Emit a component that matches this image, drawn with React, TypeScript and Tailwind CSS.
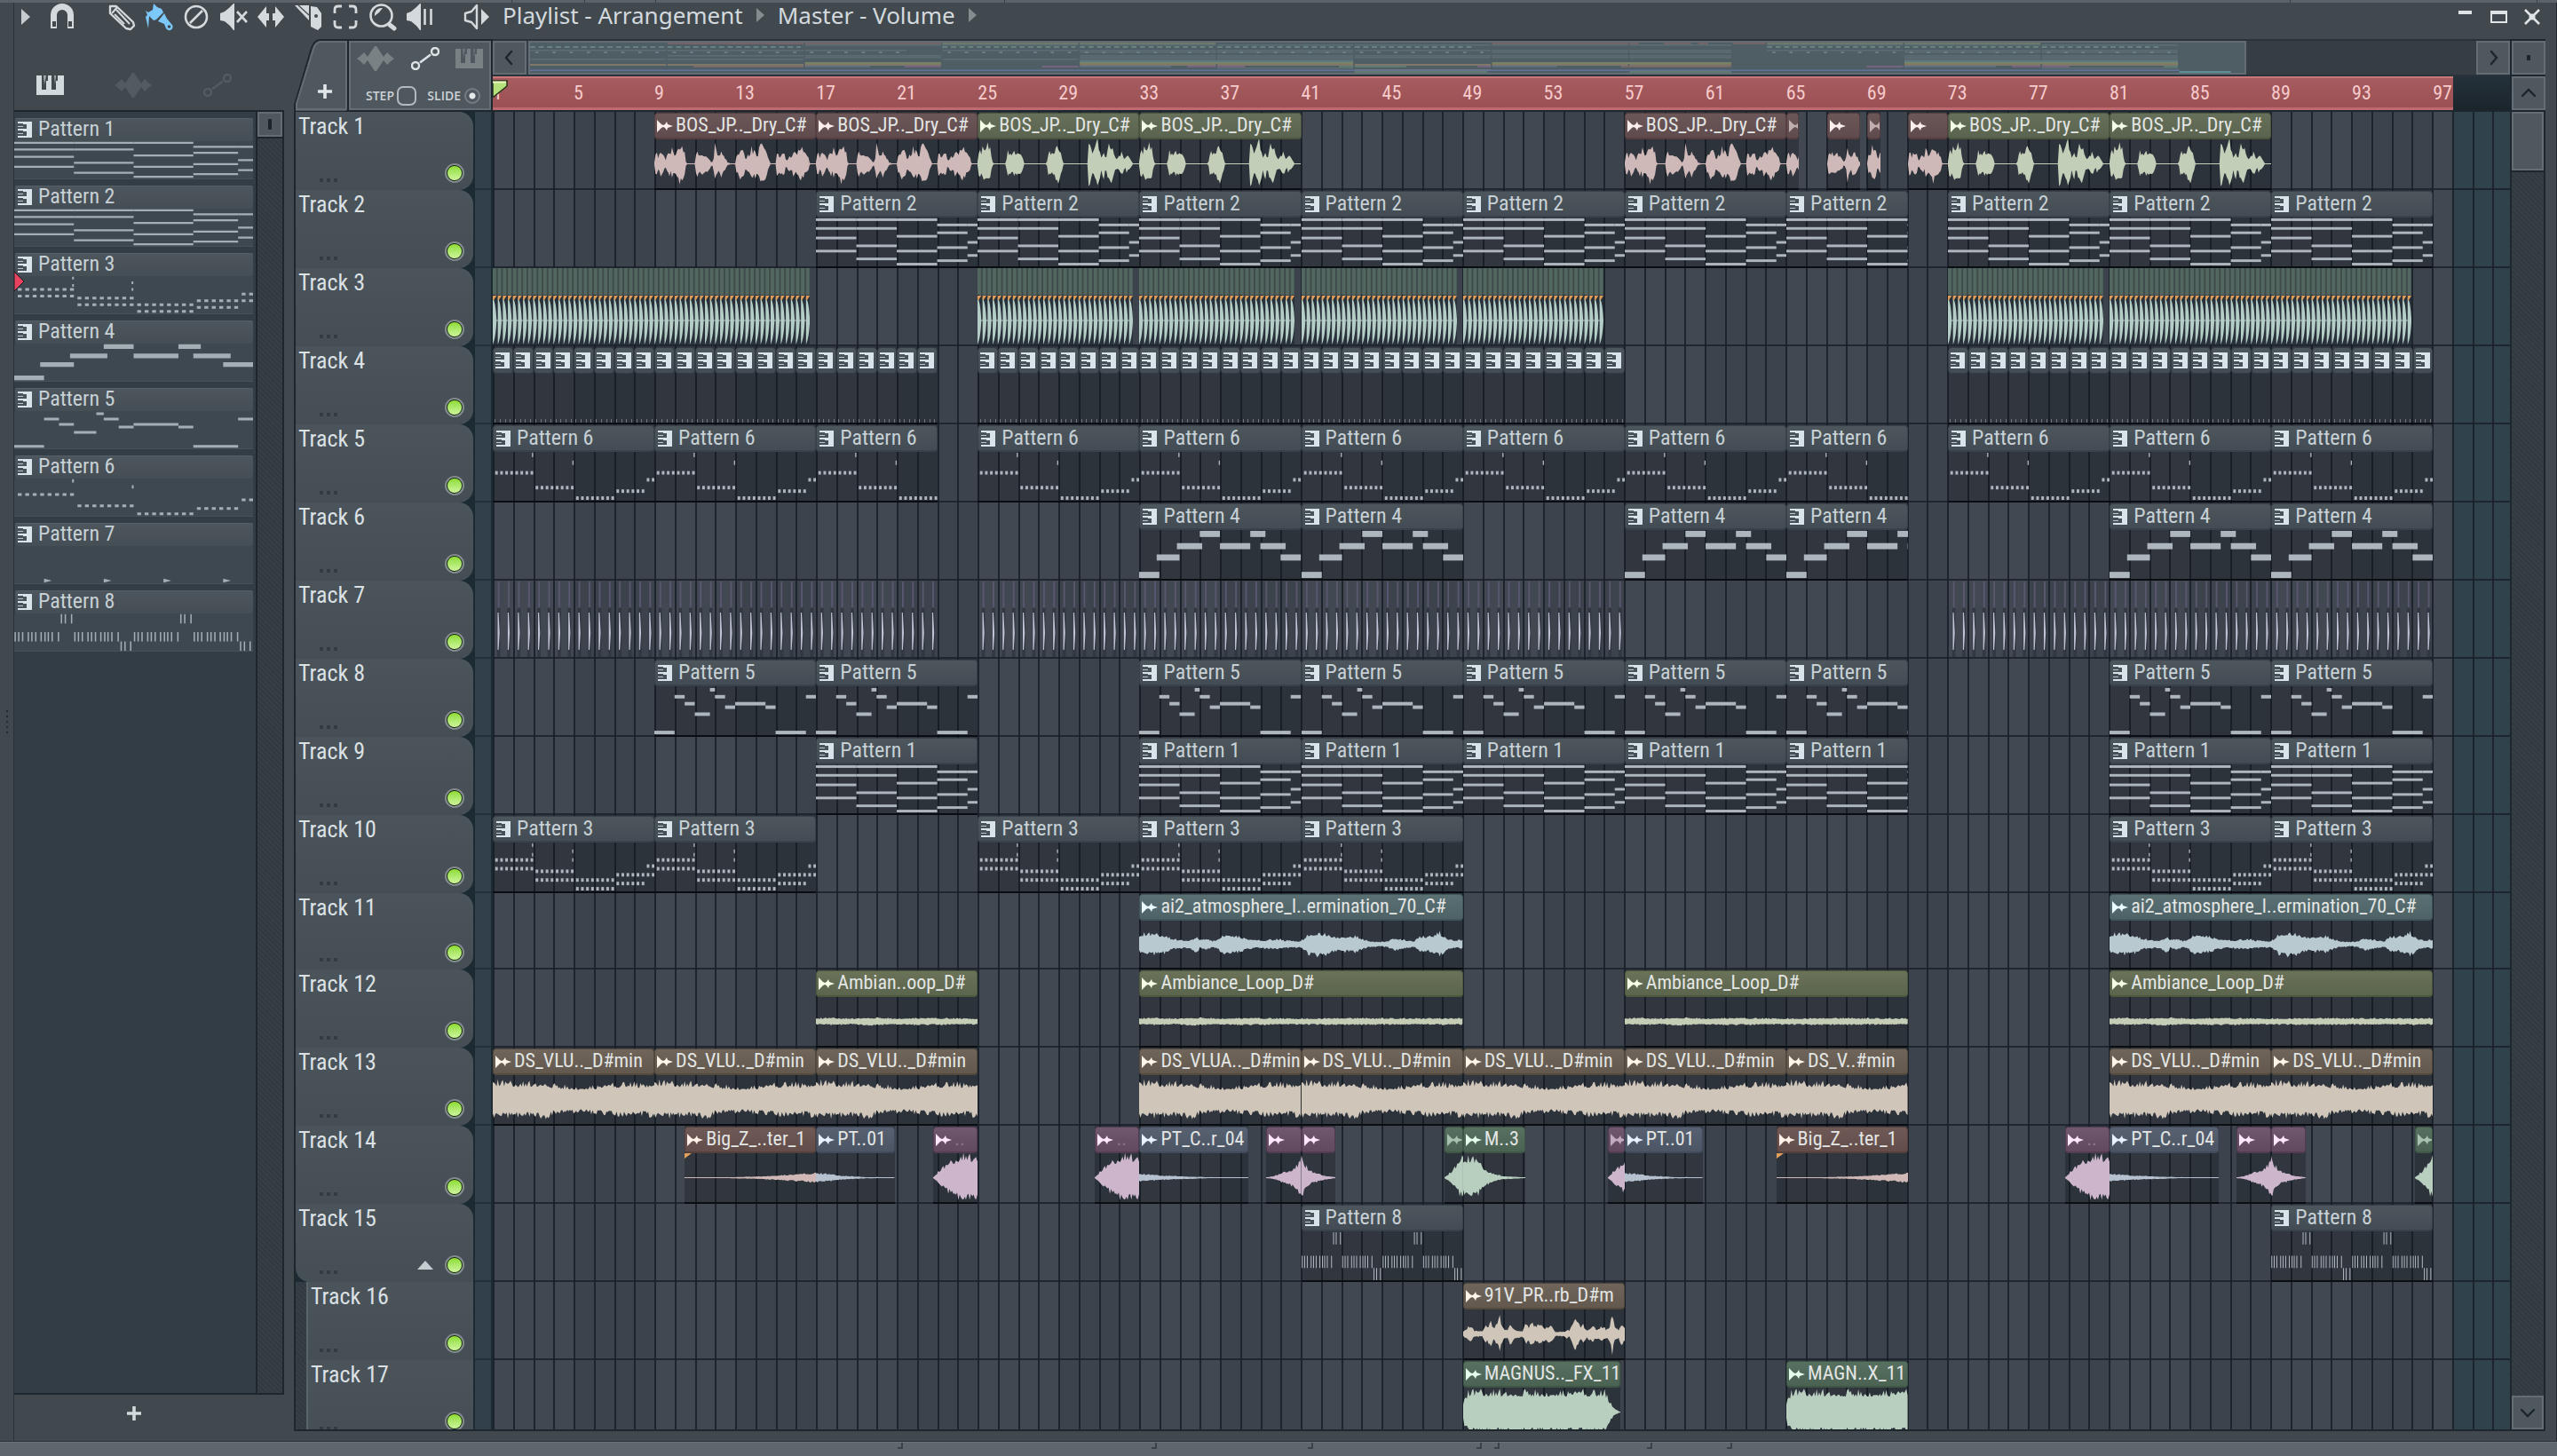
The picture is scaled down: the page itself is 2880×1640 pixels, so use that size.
import type { ReactNode } from "react"
import { clsx } from "clsx"

const TOTAL_BARS = 99.8
const SONG_END = 97

type Point = [number, number]
type Note = [start: number, end: number, y: number, h: number]

interface Tone {
  head: string
  icon: string
  wave: string
  mini: string
}

const tones: Record<string, Tone> = {
  pattern: { head: "from-[#4d565c] to-[#434c54] border-[#3a4249]", icon: "#d8e4ea", wave: "#aeb6bd", mini: "#63727a" },
  rose: { head: "from-[#6c5658] to-[#5f4b4d] border-[#573f41]", icon: "#fdeeee", wave: "#cfb8b8", mini: "#83686c" },
  moss: { head: "from-[#66705a] to-[#59634e] border-[#4b5640]", icon: "#f2ffe6", wave: "#c2ceb7", mini: "#77866d" },
  teal: { head: "from-[#5a7073] to-[#4e6266] border-[#42575b]", icon: "#eafcff", wave: "#b8cad0", mini: "#6a868c" },
  olive: { head: "from-[#6a7259] to-[#5b644c] border-[#4c5a3c]", icon: "#f4ffe4", wave: "#c5cdb6", mini: "#8a9467" },
  sand: { head: "from-[#6f655a] to-[#62584d] border-[#54493d]", icon: "#fff6ea", wave: "#cfc5b9", mini: "#94826b" },
  rust: { head: "from-[#6e5956] to-[#624d4a] border-[#553f3b]", icon: "#fff0ea", wave: "#cfb8b5", mini: "#86706b" },
  steel: { head: "from-[#576171] to-[#4b5564] border-[#404a5a]", icon: "#e8f1ff", wave: "#b6c1cf", mini: "#65758c" },
  plum: { head: "from-[#70586f] to-[#614a60] border-[#533b52]", icon: "#ffe8fb", wave: "#cdb6cc", mini: "#86688c" },
  fern: { head: "from-[#577060] to-[#4b6253] border-[#3e5646]", icon: "#e2fdea", wave: "#b8cebe", mini: "#648a74" }
}

function row(from: number, count: number, y: number, h = 4): Note[] {
  return Array.from({ length: count }, (_, i) => [from + i * 0.25, from + i * 0.25 + 0.13, y, h])
}

function ticks(offset: number, xs: number[], y: number, h: number): Note[] {
  return xs.map((x) => [offset + x, offset + x + 0.045, y, h])
}

const chords: Note[] = [
  [0, 2, 1, 3], [0, 2, 11, 3], [0, 2, 22, 3], [0, 2, 37, 3],
  [2, 4, 1, 3], [2, 4, 11, 3], [2, 4, 31, 3], [2, 4, 46, 3],
  [4, 6, 1, 3], [4, 6, 20, 3], [4, 6, 37, 3], [4, 6, 52, 3],
  [6, 7.5, 7, 3], [6, 7.5, 16, 3], [6, 7.5, 33, 3], [6, 7.5, 48, 3],
  [7.5, 8, 7, 3], [7.5, 8, 27, 3], [7.5, 8, 42, 3]
]

const midTicks = [0.01, 0.13, 0.26, 0.45, 0.57, 0.7, 0.88, 1.01, 1.12, 1.25, 1.46]

const patterns: Record<number, Note[]> = {
  1: chords,
  2: chords,
  3: [
    ...row(0.12, 8, 18), ...row(0.12, 8, 28), ...row(2.12, 8, 31), ...row(2.12, 8, 41),
    ...row(4.12, 8, 41), ...row(4.12, 8, 51), ...row(6.12, 6, 35), ...row(6.12, 6, 45),
    ...row(7.62, 2, 25), ...row(7.62, 2, 35),
    [1.94, 2, 1, 4], [1.94, 2, 12, 4], [3.93, 3.99, 8, 4], [3.93, 3.99, 18, 4]
  ],
  4: [
    [0, 1, 48, 7], [0.87, 2, 28, 7], [1.87, 3.12, 15, 7], [3, 4, 1, 7], [4, 5.5, 15, 7],
    [5.5, 6.25, 1, 7], [6, 7.25, 15, 7], [7, 8, 28, 7]
  ],
  5: [
    [0, 1, 51, 4], [1, 1.5, 10, 4], [1.5, 2, 18, 4], [2, 2.75, 30, 4], [2.75, 3, 2, 4], [3, 3.5, 10, 4],
    [3.5, 4, 22, 4], [4, 5.5, 18, 4], [5.5, 6, 22, 4], [6, 7.5, 51, 4], [7.5, 8, 10, 4]
  ],
  6: [
    ...row(0.12, 8, 22), ...row(2.12, 8, 39), ...row(4.12, 8, 51), ...row(6.12, 6, 43), ...row(7.62, 2, 30),
    [1.94, 2, 1, 5], [3.94, 4, 10, 5]
  ],
  7: [],
  8: [
    ...[0, 2, 4, 6].flatMap((o) => ticks(o, midTicks, 28, 14)),
    ...ticks(0, [1.56, 1.69, 1.9], 1, 14), ...ticks(4, [1.56, 1.69, 1.9], 1, 14),
    ...ticks(0, [3.56, 3.69, 3.88], 42, 14), ...ticks(4, [3.56, 3.69, 3.88], 42, 14)
  ]
}

// amplitude envelopes: [bar, half height]
const waves: Record<string, Point[]> = {
  vox: [
    [0, 2], [0.1, 19], [0.22, 6], [0.3, 19], [0.42, 12], [0.55, 5], [0.7, 15], [0.82, 12], [0.88, 19], [0.98, 12],
    [1.1, 16], [1.2, 24], [1.38, 23], [1.5, 14], [1.58, 0], [2.02, 0], [2.08, 17], [2.25, 13], [2.5, 12], [2.7, 8],
    [2.85, 1], [2.95, 10], [3.01, 28], [3.08, 12], [3.2, 10], [3.32, 18], [3.5, 8], [3.62, 2], [3.85, 0], [4.03, 1],
    [4.08, 18], [4.15, 9], [4.22, 21], [4.4, 21], [4.52, 5], [4.65, 15], [4.72, 9], [4.8, 23], [4.9, 13], [4.98, 20],
    [5.1, 9], [5.24, 28], [5.38, 27], [5.55, 14], [5.75, 0], [6.02, 0], [6.08, 21], [6.2, 9], [6.3, 15], [6.42, 14],
    [6.52, 3], [6.7, 12], [6.8, 7], [6.9, 21], [7, 12], [7.12, 16], [7.22, 25], [7.4, 15], [7.6, 12], [7.7, 0], [8, 0]
  ],
  chops: [
    [0, 3], [0.1, 22], [0.2, 15], [0.3, 24], [0.42, 18], [0.5, 24], [0.62, 21], [0.72, 4], [0.78, 0], [1.4, 0],
    [1.48, 16], [1.65, 13], [1.85, 15], [1.98, 16], [2.1, 12], [2.22, 13], [2.3, 0], [3.42, 0], [3.5, 15], [3.7, 14],
    [3.82, 18], [3.92, 28], [4.05, 21], [4.15, 12], [4.26, 0], [5.45, 0], [5.5, 26], [5.62, 22], [5.7, 12],
    [5.8, 22], [5.92, 30], [6.05, 18], [6.12, 10], [6.25, 18], [6.35, 6], [6.5, 24], [6.68, 24], [6.82, 7], [7, 9],
    [7.17, 16], [7.28, 5], [7.39, 11], [7.55, 8], [7.68, 0], [8, 0]
  ],
  atmosphere: [
    [0, 10], [0.2, 14], [0.8, 13], [1.3, 12], [1.6, 7], [2, 6], [2.4, 5], [2.7, 8], [2.88, 12], [3, 5], [3.4, 8],
    [3.6, 4], [3.9, 7], [4.1, 12], [4.3, 14], [5, 10], [5.5, 6], [6, 5], [6.9, 7], [7.2, 5], [7.6, 5], [7.9, 4],
    [8.1, 6], [8.4, 14], [8.9, 16], [9.3, 13], [9.8, 9], [10.1, 11], [10.4, 9], [10.7, 12], [11, 7], [11.4, 4],
    [12, 3], [12.4, 5], [12.7, 9], [13, 6], [13.6, 4], [13.9, 11], [14.4, 10], [14.85, 16], [15.2, 8], [15.6, 5],
    [16, 6]
  ],
  ambiance: [[0, 4], [1, 4.5], [1.8, 3.6], [2.5, 5], [4, 4], [5, 4.5], [8, 3.8], [10, 4.5], [13, 4], [16, 4.2]],
  drone: [[0, 23], [0.8, 21], [2.2, 21], [2.6, 23], [3, 18], [4.5, 16], [5.5, 18], [6.7, 21], [7.5, 19], [8, 23]],
  swellBig: [[0, 0], [0.3, 9], [0.6, 15], [0.9, 20], [1.3, 27], [1.6, 29], [1.9, 26], [2.2, 27]],
  swellCut: [[0, 0], [0.3, 9], [0.84, 18]],
  riser: [[0, 0.5], [0.4, 2], [0.9, 7], [1.3, 11], [1.55, 16], [1.74, 29]],
  fall: [[0, 29], [0.1, 19], [0.25, 14], [0.45, 8], [0.8, 5], [1.2, 2.5], [1.7, 0.5]],
  bloomIn: [[0, 0.5], [0.4, 9], [0.6, 16], [0.8, 22], [0.92, 27]],
  bloomOut: [[0, 20], [0.2, 25], [0.5, 24], [0.7, 22], [0.95, 14], [1.2, 9], [1.5, 5], [2, 2], [3.08, 0.5]],
  reverse: [[0, 0.5], [2, 0.6], [3.5, 1.5], [5, 3.5], [6.5, 6]],
  tail: [[0, 6], [0.5, 5], [1.3, 2.5], [2.5, 0.8], [3.88, 0.5]],
  tailSoft: [[0, 5], [1, 3], [2.4, 1.6], [3.4, 0.7], [5.4, 0.5]],
  strings: [
    [0, 3], [0.35, 11], [0.55, 4], [0.95, 3], [1.1, 13], [1.22, 9], [1.35, 19], [1.5, 7], [1.7, 16], [1.8, 22],
    [1.95, 11], [2.05, 5], [2.2, 6], [2.3, 14], [2.6, 5], [2.95, 4], [3.1, 13], [3.25, 9], [3.4, 19], [3.55, 9],
    [3.8, 15], [4.05, 8], [4.35, 13], [4.55, 3], [5, 3], [5.15, 6], [5.25, 4], [5.4, 14], [5.55, 19], [5.7, 15],
    [5.82, 8], [5.92, 12], [6.1, 5], [6.4, 10], [6.6, 6], [6.9, 10], [7.1, 5], [7.25, 11], [7.39, 26], [7.48, 10],
    [7.7, 6], [7.85, 15], [8, 9]
  ],
  impact: [[0, 10], [0.08, 20], [0.3, 26], [7, 26], [7.2, 17], [7.4, 6], [7.8, 0]]
}

interface Clip {
  at: number
  end: number
  label?: string
  tone: keyof typeof tones
  pattern?: number
  wave?: string
  offset?: number
  faded?: boolean
  marker?: boolean
}

const pat = (n: number, spans: number[][]): Clip[] =>
  spans.map(([at, end]) => ({ at, end: end ?? at + 8, label: `Pattern ${n}`, tone: "pattern", pattern: n }))

const smp = (tone: string, wave: string, at: number, end: number, label?: string, extra?: Partial<Clip>): Clip => ({
  at, end, tone, wave, label, ...extra
})

const vox = "BOS_JP.._Dry_C#"
const drone = "DS_VLU.._D#min"

interface Track {
  name: string
  clips: Clip[]
  kicks?: number[][]
  hats?: number[][]
  steps?: number[][]
  short?: boolean
}

const tracks: Track[] = [
  {
    name: "Track 1",
    clips: [
      smp("rose", "vox", 8, 16, vox), smp("rose", "vox", 16, 24, vox),
      smp("moss", "chops", 24, 32, vox), smp("moss", "chops", 32, 40, vox),
      smp("rose", "vox", 56, 64, vox), smp("rose", "vox", 64, 64.62, "", { faded: true }),
      smp("rose", "vox", 66, 67.66, "", { offset: 2 }), smp("rose", "vox", 68, 68.66, "", { offset: 4, faded: true }),
      smp("rose", "vox", 70, 72, "", { offset: 6 }),
      smp("moss", "chops", 72, 80, vox), smp("moss", "chops", 80, 88, vox)
    ]
  },
  { name: "Track 2", clips: pat(2, [[16], [24], [32], [40], [48], [56], [64, 70], [72], [80], [88]]) },
  { name: "Track 3", clips: [], kicks: [[0, 63], [24, 31], [32, 31], [40, 31], [48, 28], [72, 31], [80, 60]] },
  { name: "Track 4", clips: [], steps: [[0, 22], [24, 56], [72, 96]] },
  { name: "Track 5", clips: pat(6, [[0], [8], [16, 22], [24], [32], [40], [48], [56], [64, 70], [72], [80], [88]]) },
  { name: "Track 6", clips: pat(4, [[32], [40], [56], [64, 70], [80], [88]]) },
  { name: "Track 7", clips: [], hats: [[0, 22], [24, 56], [72, 96]] },
  { name: "Track 8", clips: pat(5, [[8], [16], [32], [40], [48], [56], [64, 70], [80], [88]]) },
  { name: "Track 9", clips: pat(1, [[16], [32], [40], [48], [56], [64, 70], [80], [88]]) },
  { name: "Track 10", clips: pat(3, [[0], [8], [24], [32], [40], [80], [88]]) },
  {
    name: "Track 11",
    short: true,
    clips: [32, 80].map((at) => smp("teal", "atmosphere", at, at + 16, "ai2_atmosphere_l..ermination_70_C#"))
  },
  {
    name: "Track 12",
    clips: [
      smp("olive", "ambiance", 16, 24, "Ambian..oop_D#"), smp("olive", "ambiance", 32, 48, "Ambiance_Loop_D#"),
      smp("olive", "ambiance", 56, 70, "Ambiance_Loop_D#"), smp("olive", "ambiance", 80, 96, "Ambiance_Loop_D#")
    ]
  },
  {
    name: "Track 13",
    clips: [
      smp("sand", "drone", 0, 8, drone), smp("sand", "drone", 8, 16, drone), smp("sand", "drone", 16, 24, drone),
      smp("sand", "drone", 32, 40, "DS_VLUA.._D#min"), smp("sand", "drone", 40, 48, drone),
      smp("sand", "drone", 48, 56, drone), smp("sand", "drone", 56, 64, drone),
      smp("sand", "drone", 64, 70, "DS_V..#min"), smp("sand", "drone", 80, 88, drone), smp("sand", "drone", 88, 96, drone)
    ]
  },
  {
    name: "Track 14",
    clips: [
      smp("rust", "reverse", 9.5, 16, "Big_Z_..ter_1", { marker: true }), smp("steel", "tail", 16, 19.88, "PT..01"),
      smp("plum", "swellBig", 21.8, 24, ".."), smp("plum", "swellBig", 29.8, 32, ".."),
      smp("steel", "tailSoft", 32, 37.4, "PT_C..r_04"),
      smp("plum", "riser", 38.26, 40), smp("plum", "fall", 40, 41.7),
      smp("fern", "bloomIn", 47.08, 48, "", { faded: true }), smp("fern", "bloomOut", 48, 51.08, "M..3"),
      smp("plum", "swellCut", 55.16, 56, "", { faded: true }), smp("steel", "tail", 56, 59.85, "PT..01"),
      smp("rust", "reverse", 63.5, 70, "Big_Z_..ter_1", { marker: true }),
      smp("plum", "swellBig", 77.8, 80, ".."), smp("steel", "tailSoft", 80, 85.4, "PT_C..r_04"),
      smp("plum", "riser", 86.26, 88), smp("plum", "fall", 88, 89.7),
      smp("fern", "bloomIn", 95.08, 96, "", { faded: true })
    ]
  },
  { name: "Track 15", clips: pat(8, [[40], [88]]) },
  { name: "Track 16", clips: [smp("sand", "strings", 48, 56, "91V_PR..rb_D#m")] },
  {
    name: "Track 17",
    clips: [smp("fern", "impact", 48, 55.8, "MAGNUS.._FX_11"), smp("fern", "impact", 64, 70, "MAGN..X_11")]
  }
]

const pct = (bars: number) => `${(bars / TOTAL_BARS) * 100}%`

function noise(n: number) {
  const s = Math.sin(n * 127.1 + 11.7) * 43758.5453
  return s - Math.floor(s)
}

function envelope(points: Point[], x: number) {
  const i = points.findIndex((p) => p[0] >= x)
  if (i <= 0) return points[i < 0 ? points.length - 1 : 0][1]
  const [x0, a0] = points[i - 1]
  const [x1, a1] = points[i]
  return a0 + ((a1 - a0) * (x - x0)) / (x1 - x0)
}

function wavePath(points: Point[], from: number, length: number) {
  const step = 1 / 16
  const count = Math.ceil(length / step)
  const top: string[] = []
  const bottom: string[] = []
  for (let i = 0; i <= count; i++) {
    const x = Math.min(i * step, length)
    const a = envelope(points, from + x)
    const up = Math.max(0.5, a * (0.68 + 0.36 * noise(i) ** 2))
    const down = Math.max(0.5, a * (0.68 + 0.36 * noise(i + 900) ** 2))
    top.push(`${x.toFixed(3)} ${(28 - up).toFixed(1)}`)
    bottom.unshift(`${x.toFixed(3)} ${(28 + down).toFixed(1)}`)
  }
  return `M${top.join("L")}L${bottom.join("L")}Z`
}

function Icon({ children, className, box = "0 0 32 32" }: { children: ReactNode; className?: string; box?: string }) {
  return (
    <svg aria-hidden="true" className={clsx("shrink-0", className)} fill="none" viewBox={box}>
      {children}
    </svg>
  )
}

function PianoMark({ color = "#d8e4ea" }: { color?: string }) {
  return (
    <Icon box="0 0 16 18" className="h-[18px] w-4">
      <path d="M0 0H16V18H0V16H10V11H6V10H0V8H10V3H6V2H0Z" fill={color} />
      <path d="M0 5H6V6H0ZM0 13H6V14H0Z" fill={color} opacity="0.8" />
    </Icon>
  )
}

function SampleMark({ color }: { color: string }) {
  return (
    <Icon box="0 0 18 16" className="h-4 w-[18px]">
      <path d="M0 1 5 6 7 7 9 6 11 3 12 6 15 7 18 8 15 9 12 10 11 13 9 10 7 9 5 10 0 15Z" fill={color} />
    </Icon>
  )
}

function BigPiano({ className }: { className?: string }) {
  return (
    <Icon box="0 0 31 22" className={clsx("h-[22px] w-[31px]", className)}>
      <path d="M0 0H6V16H11V6H13V0H17V16H22V6H24V0H31V22H0Z" fill="currentColor" />
      <path d="M8 0 9 10 11 0ZM20 0 21 10 22 0Z" fill="currentColor" opacity="0.7" />
    </Icon>
  )
}

function BigWave({ className }: { className?: string }) {
  return (
    <Icon box="0 0 42 28" className={clsx("h-7 w-[42px]", className)}>
      <path
        d="M0 14 4 11 8 7 12 12 16 6 20 0H22L26 6 30 12 34 7 38 11 42 14 38 17 34 21 30 16 26 22 22 28H20L16 22 12 16 8 21 4 17Z"
        fill="currentColor"
      />
    </Icon>
  )
}

function BigLine({ className }: { className?: string }) {
  return (
    <Icon box="0 0 32 26" className={clsx("h-[26px] w-8", className)}>
      <circle cx="5" cy="21" r="4" stroke="currentColor" strokeWidth="2.4" />
      <circle cx="27" cy="5" r="4" stroke="currentColor" strokeWidth="2.4" />
      <path d="M10 17.500 22 8.500" stroke="currentColor" strokeWidth="2.600" />
    </Icon>
  )
}

const tools = [
  {
    label: "Draw",
    art: (
      <g stroke="currentColor" strokeLinejoin="round" strokeWidth="2.400">
        <path d="M3 4H10L29 22 30 26 26 30 21 29 3 12Z" />
        <path d="M5 12 11 5M10 8 25 24M8 13 19 24" strokeWidth="2" />
      </g>
    )
  },
  {
    label: "Paint",
    active: true,
    art: (
      <>
        <path d="M1 9 4 11 9 8 10 1 14 5 19 7 21 11 13 19 10 20 5 15 4 29 1 16 3 14Z" fill="currentColor" />
        <path d="M22 12 25 18 30 24A4 4 0 1 1 24 29L22 24 15 21Z" fill="currentColor" />
        <circle cx="27.500" cy="27" fill="#41494f" r="1.800" />
      </>
    )
  },
  {
    label: "Delete",
    art: (
      <g stroke="currentColor" strokeWidth="2.600">
        <circle cx="16" cy="16" r="12" />
        <path d="M9 23 23 9" />
      </g>
    )
  },
  {
    label: "Mute",
    art: (
      <>
        <path d="M1 12 6 10 12 5 16 1H17V31H16L12 26 6 21 1 20Z" fill="currentColor" />
        <path d="M20 10 31 22M31 10 20 22" stroke="currentColor" strokeWidth="2.600" />
      </>
    )
  },
  {
    label: "Slip",
    art: <path d="M1 16 11 4V12H14V20H11V28ZM31 16 21 4V12H18V20H21V28Z" fill="currentColor" />
  },
  {
    label: "Slice",
    art: (
      <>
        <path d="M1 3H17V20Z" fill="currentColor" />
        <path d="M5 3 17 14" stroke="#41494f" strokeWidth="1.200" />
        <path d="M19 4 26 5 31 12V27L27 31 19 27Z" fill="currentColor" />
        <circle cx="25" cy="15" fill="#41494f" r="2" />
      </>
    )
  },
  {
    label: "Select",
    art: (
      <path
        d="M4 12V8Q4 4 8 4H12M20 4H24Q28 4 28 8V12M28 20V24Q28 28 24 28H20M12 28H8Q4 28 4 24V20"
        stroke="currentColor"
        strokeWidth="2.800"
      />
    )
  },
  {
    label: "Zoom",
    art: (
      <>
        <circle cx="14.500" cy="14.500" r="12" stroke="currentColor" strokeWidth="2.600" />
        <path d="M7 15A8 8 0 0 1 16 6L12 11Z" fill="currentColor" />
        <path d="M24 25 29 29" stroke="currentColor" strokeLinecap="round" strokeWidth="5" />
      </>
    )
  },
  {
    label: "Playback",
    art: (
      <>
        <path d="M1 12 6 10 12 5 16 1H17V31H16L12 26 6 21 1 20Z" fill="currentColor" />
        <path d="M21.500 7V25M28.500 7V25" stroke="currentColor" strokeWidth="2.600" />
      </>
    )
  }
]

function TitleBar() {
  return (
    <header className="-mr-1 flex h-[41px] shrink-0 items-start text-[#d3d9dd]">
      <button aria-label="Menu" className="flex h-8 w-[26px] items-center justify-center" type="button">
        <Icon box="0 0 10 18" className="h-[18px] w-[10px]">
          <path d="M0 0 10 9 0 18Z" fill="#c5cbcf" />
        </Icon>
      </button>
      <button aria-label="Snap" className="mr-[18px] flex w-14 justify-center" type="button">
        <Icon className="size-8">
          <path d="M6.500 29V14A9.500 9.500 0 0 1 25.500 14V29" stroke="currentColor" strokeWidth="7" />
          <path d="M5 21H9V27H5ZM23 21H27V27H23Z" fill="#41494f" />
        </Icon>
      </button>
      {tools.map((tool) => (
        <button
          aria-label={tool.label}
          className={clsx("flex w-[42px] justify-center", tool.active && "text-[#7cc8f8]")}
          key={tool.label}
          type="button"
        >
          <Icon className="size-8">{tool.art}</Icon>
        </button>
      ))}
      <button aria-label="Preview" className="ml-[22px] flex w-[42px] justify-center" type="button">
        <Icon className="size-8">
          <path d="M16 3V29L10 22 3 20V12L10 10Z" stroke="currentColor" strokeLinejoin="round" strokeWidth="2.400" />
          <path d="M21 7 30 16 21 25Z" fill="currentColor" />
        </Icon>
      </button>
      <h1 className="ml-2 flex items-center gap-[15px] font-['Noto_Sans',sans-serif] text-[26px] leading-7">
        <span>Playlist - Arrangement</span>
        <Crumb />
        <span>Master - Volume</span>
        <Crumb />
      </h1>
      <div className="ml-auto flex">
        <button aria-label="Minimize" className="flex h-8 w-[38px] justify-center pt-[9px]" type="button">
          <span className="h-1 w-[15px] bg-[#dfe4e7]" />
        </button>
        <button aria-label="Maximize" className="flex h-8 w-[38px] items-center justify-center" type="button">
          <span className="h-[14px] w-[19px] border-2 border-t-4 border-[#dfe4e7]" />
        </button>
        <button aria-label="Close" className="flex h-8 w-[38px] items-center justify-center" type="button">
          <Icon box="0 0 18 18" className="size-[18px]">
            <path d="M1 1 17 17M17 1 1 17" stroke="#dfe4e7" strokeWidth="2.600" />
            <circle cx="9" cy="9" fill="#dfe4e7" r="3.500" />
          </Icon>
        </button>
      </div>
    </header>
  )
}

function Crumb() {
  return (
    <Icon box="0 0 9 16" className="h-4 w-[9px]">
      <path d="M0 0 9 8 0 16Z" fill="#858c90" />
    </Icon>
  )
}

function Notes({ pattern, length = 8, color, className }: { pattern: number; length?: number; color: string; className?: string }) {
  return (
    <svg aria-hidden="true" className={className} preserveAspectRatio="none" viewBox={`0 0 ${length} 56`}>
      {patterns[pattern].map(([a, b, y, h], i) => (
        <rect fill={color} height={h} key={i} width={b - a} x={a} y={y} />
      ))}
      {pattern === 7 && [1, 3, 5, 7].map((x) => <path d={`M${x} 49 ${x + 0.26} 52 ${x} 55Z`} fill={color} key={x} />)}
    </svg>
  )
}

const hatch = "bg-[repeating-linear-gradient(45deg,#373f46_0_2px,#323a41_2px_4px)]"

function Picker() {
  return (
    <aside className="flex w-[304px] shrink-0 flex-col">
      <div className="flex h-20 shrink-0 items-center pt-6 pl-[14px]">
        <button aria-label="Patterns" className="flex w-[52px] justify-center text-[#d3dade]" type="button">
          <BigPiano />
        </button>
        <button aria-label="Audio clips" className="ml-[42px] flex w-[52px] justify-center text-[#525b61]" type="button">
          <BigWave />
        </button>
        <button aria-label="Automation clips" className="ml-[43px] flex w-[52px] justify-center text-[#525b61]" type="button">
          <BigLine />
        </button>
      </div>
      <div className="flex min-h-0 flex-1 border-y-2 border-r-2 border-[#1e272e]">
        <ul className="flex flex-1 flex-col gap-[7px] border-r-2 border-[#1e272e] bg-[#333d45] pt-[7px]">
          {[1, 2, 3, 4, 5, 6, 7, 8].map((n) => (
            <li className="relative w-[269px]" key={n}>
              <button
                className="ml-px flex h-[26px] w-[268px] items-center gap-[7px] rounded-xs border-t border-[#566067] bg-linear-to-b from-[#4d565d] to-[#454e55] pb-[2px] pl-[3px] text-left text-2xl leading-6 text-[#c6d0d5]"
                type="button"
              >
                <PianoMark />
                <span className="pb-[2px]">Pattern {n}</span>
              </button>
              <Notes
                className="block h-[43px] w-full border-b border-[#465159] bg-[#3e4850]"
                color="#a4afb5"
                pattern={n}
              />
              {n === 3 && (
                <svg aria-hidden="true" className="absolute top-5 left-0 h-6 w-3" viewBox="0 0 12 24">
                  <path d="M0 1 11 12 0 23Z" fill="#e8425e" stroke="#181c20" />
                </svg>
              )}
            </li>
          ))}
        </ul>
        <div className={clsx("w-7 shrink-0", hatch)}>
          <button
            aria-label="Scroll patterns"
            className="flex size-7 items-center justify-center border-2 border-[#646d74] bg-[#4f585f] shadow-[0_2px_0_#1e272e]"
            type="button"
          >
            <span className="h-3 w-1 bg-[#1d252c]" />
          </button>
        </div>
      </div>
      <button
        aria-label="Add pattern"
        className="flex h-[41px] w-[269px] shrink-0 items-center justify-center text-[#d3dade]"
        type="button"
      >
        <Plus />
      </button>
    </aside>
  )
}

function Plus() {
  return (
    <Icon box="0 0 16 16" className="size-4">
      <path d="M8 0V16M0 8H16" stroke="currentColor" strokeWidth="3.600" />
    </Icon>
  )
}

function TrackTools() {
  return (
    <div className="flex h-[82px] w-[224px] shrink-0">
      <button aria-label="Add track" className="relative w-[60px] text-[#e2e7ea]" type="button">
        <svg aria-hidden="true" className="absolute inset-0 size-full" fill="none" viewBox="0 0 60 82">
          <path d="M1 82V74L20 10Q23 1 30 1H60V82Z" fill="#4f585f" stroke="#1e272e" strokeWidth="2" />
          <path d="M3 79V73L22 11Q25 3 31 3H59V79Z" stroke="#646d74" strokeWidth="2" />
        </svg>
        <span className="relative flex justify-center pt-9 pl-[10px]">
          <Plus />
        </span>
      </button>
      <div className="flex w-[164px] flex-col border-2 border-[#1e272e]">
        <div className="flex h-full flex-col justify-between border-2 border-[#646d74] bg-[#4f585f] px-[7px] pt-1 pb-[3px]">
          <div className="flex items-center justify-between">
            <button aria-label="Audio" className="text-[#7a8185]" type="button">
              <BigWave />
            </button>
            <button aria-label="Automation" className="text-[#dde2e5]" type="button">
              <BigLine />
            </button>
            <button aria-label="Piano roll" className="text-[#7a8185]" type="button">
              <BigPiano />
            </button>
          </div>
          <div className="flex items-center justify-between pr-[3px] pl-[10px] font-['Open_Sans',sans-serif] text-[14px] leading-[22px] font-semibold text-[#cdd3d7]">
            <label className="flex items-center gap-[3px]" htmlFor="step">
              STEP
              <input
                className="size-[22px] appearance-none rounded-[7px] border-2 border-[#b3babe]"
                id="step"
                type="checkbox"
              />
            </label>
            <label className="flex items-center gap-1" htmlFor="slide">
              SLIDE
              <input
                className="size-[18px] appearance-none rounded-full border-2 border-[#747c82] bg-[radial-gradient(circle,#e4e8ea_0_3px,transparent_4px)]"
                defaultChecked
                id="slide"
                type="radio"
              />
            </label>
          </div>
        </div>
      </div>
    </div>
  )
}

const squareButton = "flex items-center justify-center border-2 border-[#646d74] bg-[#4f585f] text-[#1d252c]"

function Chevron({ d }: { d: string }) {
  return (
    <Icon box="0 0 18 18" className="size-[18px]">
      <path d={d} stroke="currentColor" strokeLinecap="round" strokeWidth="2.400" />
    </Icon>
  )
}

function Minimap() {
  return (
    <div className="flex h-[42px] border-y-2 border-[#2b333a] bg-[#363d45]">
      <button aria-label="Scroll left" className={clsx(squareButton, "w-[38px] shrink-0")} type="button">
        <Chevron d="M11 2 5 9 11 16" />
      </button>
      <div className="min-w-0 flex-1 pl-[2px]">
        <svg
          aria-label="Arrangement overview"
          className="h-full w-[88.2%] border-2 border-[#646d74] bg-[#4f5d65]"
          preserveAspectRatio="none"
          role="img"
          viewBox={`0 0 ${TOTAL_BARS} 34`}
        >
          <g opacity="0.7">
            {tracks.map((track, i) => {
              const y = i * 2
              return (
                <g key={track.name}>
                  {track.clips.map((clip) => (
                    <rect
                      fill={tones[clip.tone].mini}
                      height={clip.tone === "pattern" ? 1.6 : 2}
                      key={clip.at}
                      width={clip.end - clip.at - 0.08}
                      x={clip.at}
                      y={y}
                    />
                  ))}
                  {track.kicks?.map(([at, n]) => (
                    <line
                      key={at}
                      stroke="#7fa396"
                      strokeDasharray="0.3 0.2"
                      strokeWidth="1.500"
                      x1={at}
                      x2={at + n / 4}
                      y1={y + 1}
                      y2={y + 1}
                    />
                  ))}
                  {track.hats?.map(([a, b]) => (
                    <line
                      key={a}
                      stroke="#8496a0"
                      strokeDasharray="0.2 0.8"
                      strokeWidth="1.500"
                      x1={a + 0.3}
                      x2={b}
                      y1={y - 1}
                      y2={y - 1}
                    />
                  ))}
                </g>
              )
            })}
            <rect fill="#6c7bb0" height="1.500" width="96" x="0" y="30.500" />
            <rect fill="#64a5a5" height="2" width="3" x="96" y="32" />
          </g>
        </svg>
      </div>
      <button aria-label="Scroll right" className={clsx(squareButton, "w-[38px] shrink-0")} type="button">
        <Chevron d="M7 2 13 9 7 16" />
      </button>
    </div>
  )
}

function Ruler() {
  return (
    <div className="relative flex h-10 overflow-hidden border-b-2 border-[#1e272e] bg-linear-to-b from-[#25313a] to-[#1a242b] text-[22px] leading-[38px] text-[#f7cbcb]">
      <div
        className="absolute inset-y-0 left-0 border-t-2 border-b-3 border-t-[#c87878] border-b-[#bd6b70] bg-linear-to-b from-[#a55b5f] to-[#9c5154]"
        style={{ width: pct(SONG_END) }}
      />
      {Array.from({ length: 25 }, (_, i) => (
        <span className="relative shrink-0" key={i} style={{ width: pct(4) }}>
          {i * 4 + 1}
        </span>
      ))}
      <svg aria-hidden="true" className="absolute top-1 left-0 h-5 w-[17px]" viewBox="0 0 17 20">
        <path d="M0 1H16V7L1 19H0Z" fill="#b5e07c" stroke="#23331a" strokeWidth="1.500" />
        <path d="M0 2.500H15" stroke="#eef8c4" strokeWidth="2" />
      </svg>
    </div>
  )
}

function TrackHeader({ track, index }: { track: Track; index: number }) {
  const child = index > 14
  return (
    <div className={clsx("flex shrink-0", track.short ? "h-[86px]" : "h-[88px]")}>
      {child && <div className={clsx("w-3 shrink-0", hatch)} />}
      <div
        className={clsx(
          "relative flex flex-1 flex-col justify-between bg-linear-to-b from-[#4b545a] to-[#454e54] pr-[10px] pb-2 pl-[3px]",
          index < 14 && "rounded-r-2xl",
          index === 14 && "rounded-tr-2xl rounded-bl-2xl",
          child && "border-l-2 border-[#59636a] pl-[2px]"
        )}
      >
        <span className="text-[26px] leading-8 text-[#dbe1e4]">{track.name}</span>
        <div className={clsx("flex items-center", child ? "pl-[10px]" : "pl-6")}>
          <span className="mt-4 flex gap-1">
            <i className="size-1 bg-[#343c43]" />
            <i className="size-1 bg-[#343c43]" />
            <i className="size-1 bg-[#343c43]" />
          </span>
          {index === 14 && (
            <svg aria-hidden="true" className="ml-auto h-[10px] w-[18px]" viewBox="0 0 18 10">
              <path d="M9 0 18 10H0Z" fill="#c6cdd1" />
            </svg>
          )}
          <button
            aria-label={`Mute ${track.name}`}
            className={clsx(
              "size-[22px] rounded-full border-2 border-[#848c8e] bg-[#132a0c] p-px",
              index === 14 ? "ml-[13px]" : "ml-auto"
            )}
            type="button"
          >
            <span className="block size-full rounded-full bg-linear-to-b from-[#8fdc2c] to-[#cdf59a]" />
          </button>
        </div>
      </div>
    </div>
  )
}

function ClipView({ clip }: { clip: Clip }) {
  const tone = tones[clip.tone]
  const length = clip.end - clip.at
  return (
    <article
      className="absolute inset-y-0 flex flex-col bg-[#10161c]/35 pt-px shadow-[0_2px_0_#0a0e13]"
      style={{ left: pct(clip.at), width: pct(length) }}
    >
      <h3
        className={clsx(
          "flex h-[30px] shrink-0 items-center overflow-hidden rounded-sm border border-b-2 bg-linear-to-b whitespace-nowrap",
          tone.head,
          clip.pattern ? "gap-[7px] pl-[3px] text-2xl text-[#c6d0d5]" : "gap-[3px] pl-[2px] text-[22px] text-[#e3e6e4]",
          clip.label === ".." && "text-white/25"
        )}
      >
        <span className={clsx("flex", clip.faded && "opacity-60")}>
          {clip.pattern ? <PianoMark color={tone.icon} /> : <SampleMark color={tone.icon} />}
        </span>
        {clip.label && <span className="pb-[2px] leading-[26px]">{clip.label}</span>}
      </h3>
      {clip.pattern ? (
        <Notes className="block min-h-0 w-full flex-1" color={tone.wave} length={length} pattern={clip.pattern} />
      ) : (
        <svg
          aria-hidden="true"
          className="block min-h-0 w-full flex-1"
          preserveAspectRatio="none"
          viewBox={`0 0 ${length} 56`}
        >
          <path d={wavePath(waves[clip.wave ?? "vox"], clip.offset ?? 0, length)} fill={tone.wave} />
          {clip.marker && <path d="M0 0H0.35L0 6Z" fill="#e0a05c" />}
        </svg>
      )}
    </article>
  )
}

function Kicks({ at, count }: { at: number; count: number }) {
  const length = count / 4 - 0.06
  const hits = Array.from({ length: count }, (_, i) => i * 0.25)
  return (
    <svg
      aria-hidden="true"
      className="absolute inset-y-0 h-full"
      preserveAspectRatio="none"
      style={{ left: pct(at), width: pct(length) }}
      viewBox={`0 0 ${length} 86`}
    >
      <rect fill="#29323a" height="56" width={length} y="31" />
      <rect fill="#3f4a4b" height="30" width={length} y="0" />
      <path d={hits.map((x) => `M${x} 0H${x + 0.17}V30H${x}Z`).join("")} fill="#52675f" />
      <path
        d={hits.map((x) => `M${x} 33C${x + 0.13} 38 ${x + 0.17} 50 ${x + 0.19} 59C${x + 0.17} 68 ${x + 0.13} 80 ${x} 86Z`).join("")}
        fill="#b5cdc7"
      />
      <path d={`M0 59H${length}`} stroke="#b5cdc7" />
      <path d={hits.map((x) => `M${x} 31H${x + 0.19}L${x + 0.05} 36H${x}Z`).join("")} fill="#dd9d58" />
    </svg>
  )
}

function Hats({ from, to }: { from: number; to: number }) {
  const length = to - from
  const hits = Array.from({ length: length * 2 }, (_, i) => i * 0.5 + 0.25)
  return (
    <svg
      aria-hidden="true"
      className="absolute inset-y-0 h-full"
      preserveAspectRatio="none"
      style={{ left: pct(from), width: pct(length) }}
      viewBox={`0 0 ${length} 86`}
    >
      <path d={hits.map((x) => `M${x} 1H${x + 0.08}V30H${x}Z`).join("")} fill="#5a5870" />
      <path d={hits.map((x) => `M${x - 0.04} 31H${x + 0.12}V86H${x - 0.04}Z`).join("")} fill="#2f363f" opacity="0.8" />
      <path d={hits.map((x) => `M${x - 0.01} 36H${x + 0.04}L${x + 0.09} 59 ${x + 0.04} 78H${x - 0.01}Z`).join("")} fill="#bfc2d4" />
    </svg>
  )
}

function Steps({ from, to }: { from: number; to: number }) {
  return (
    <div className="absolute inset-y-0 flex shadow-[0_2px_0_#0a0e13]" style={{ left: pct(from), width: pct(to - from) }}>
      {Array.from({ length: to - from }, (_, i) => (
        <div className="flex min-w-0 flex-1 flex-col justify-between bg-[#10161c]/35 pt-px" key={i}>
          <div className="flex h-[30px] items-center overflow-hidden rounded-sm border border-[#343c43] bg-linear-to-b from-[#4d565c] to-[#434c54] pl-[2px]">
            <PianoMark />
          </div>
          <div className="flex h-1 justify-around">
            <i className="w-px bg-[#6d767d]" />
            <i className="w-px bg-[#6d767d]" />
            <i className="w-px bg-[#6d767d]" />
            <i className="w-px bg-[#6d767d]" />
          </div>
        </div>
      ))}
    </div>
  )
}

function Lane({ track }: { track: Track }) {
  return (
    <div className={clsx("relative shrink-0 border-b-2 border-[#191f28]/80", track.short ? "h-[86px]" : "h-[88px]")}>
      {track.clips.map((clip) => (
        <ClipView clip={clip} key={clip.at} />
      ))}
      {track.kicks?.map(([at, count]) => <Kicks at={at} count={count} key={at} />)}
      {track.hats?.map(([from, to]) => <Hats from={from} key={from} to={to} />)}
      {track.steps?.map(([from, to]) => <Steps from={from} key={from} to={to} />)}
    </div>
  )
}

function Grid() {
  return (
    <div aria-hidden="true" className="absolute inset-0 flex overflow-hidden">
      {Array.from({ length: 100 }, (_, i) => (
        <div
          className={clsx(
            "shrink-0 border-l-2 border-[#1d242d]",
            i >= SONG_END ? "bg-[#30434d]" : i % 8 < 4 ? "bg-[#424852]" : "bg-[#3c434c]"
          )}
          key={i}
          style={{ width: pct(1) }}
        />
      ))}
    </div>
  )
}

function Playlist() {
  return (
    <section className="flex min-w-0 flex-1 flex-col">
      <div className="flex h-[82px] shrink-0">
        <TrackTools />
        <div className="flex min-w-0 flex-1 flex-col">
          <Minimap />
          <Ruler />
        </div>
        <div className="flex w-10 shrink-0 flex-col gap-[2px] border-y-2 border-l-2 border-[#1e272e] bg-[#1e272e]">
          <button aria-label="Scroll mode" className={clsx(squareButton, "flex-1")} type="button">
            <span className="h-[6px] w-1 bg-current" />
          </button>
          <button aria-label="Scroll up" className={clsx(squareButton, "flex-1")} type="button">
            <Chevron d="M2 12 9 5 16 12" />
          </button>
        </div>
      </div>
      <div className="flex min-h-0 flex-1 border-b-2 border-l-2 border-[#1e272e]">
        <div className="flex w-[202px] shrink-0 flex-col overflow-hidden bg-[#1c2a32] pr-[2px]">
          {tracks.map((track, i) => (
            <TrackHeader index={i} key={track.name} track={track} />
          ))}
        </div>
        <div className="flex w-5 shrink-0 flex-col overflow-hidden border-r-2 border-[#1c2a32] bg-[#31404a]">
          {tracks.map((track) => (
            <div
              className={clsx("shrink-0 border-b-2 border-[#23313a]", track.short ? "h-[86px]" : "h-[88px]")}
              key={track.name}
            />
          ))}
        </div>
        <div className="relative min-w-0 flex-1 overflow-hidden">
          <Grid />
          <div className="relative flex h-full flex-col">
            {tracks.map((track) => (
              <Lane key={track.name} track={track} />
            ))}
          </div>
        </div>
        <div className={clsx("flex w-10 shrink-0 flex-col border-x-2 border-[#1e272e]", hatch)}>
          <div className="h-[66px] border-2 border-[#646d74] bg-[#4f585f] shadow-[0_2px_0_#1e272e]" />
          <button aria-label="Scroll down" className={clsx(squareButton, "mt-auto h-[38px]")} type="button">
            <Chevron d="M2 6 9 13 16 6" />
          </button>
        </div>
      </div>
    </section>
  )
}

// space before each mark on the window edges, as flex shares
const topMarks = [577, 81, 80, 392, 1450, 278, 22]
const bottomMarks = [1017, 286, 176, 190, 20, 172, 90, 929]

export default function App() {
  return (
    <div className="flex h-screen flex-col overflow-hidden bg-[#41494f] font-['Roboto_Condensed','Roboto',sans-serif]">
      <div className="flex h-[3px] shrink-0 bg-[#5b6268]">
        {topMarks.map((share) => (
          <div className="border-r border-[#3a4248] last:border-r-0" key={share} style={{ flex: share }} />
        ))}
      </div>
      <div className="flex min-h-0 flex-1 border-b border-[#2c343a]">
        <div className="flex w-4 shrink-0 flex-col items-center justify-center gap-1 border-r border-[#2c343a]">
          {[0, 1, 2, 3, 4].map((n) => (
            <i className="size-[2px] bg-[#23292e]" key={n} />
          ))}
        </div>
        <div className="flex min-w-0 flex-1 flex-col pb-[11px]">
          <TitleBar />
          <main className="flex min-h-0 flex-1 gap-[11px]">
            <Picker />
            <Playlist />
          </main>
        </div>
        <div className="w-[13px] shrink-0 border-r border-[#23292f]" />
      </div>
      <footer className="flex h-4 shrink-0 items-start border-t border-[#6a7279] bg-[#5f676e]">
        {bottomMarks.map((share) => (
          <div className="group flex justify-end" key={share} style={{ flex: share }}>
            <i className="h-[7px] w-[6px] border-r-2 border-b-2 border-[#3a4248] group-last:hidden" />
          </div>
        ))}
      </footer>
    </div>
  )
}
